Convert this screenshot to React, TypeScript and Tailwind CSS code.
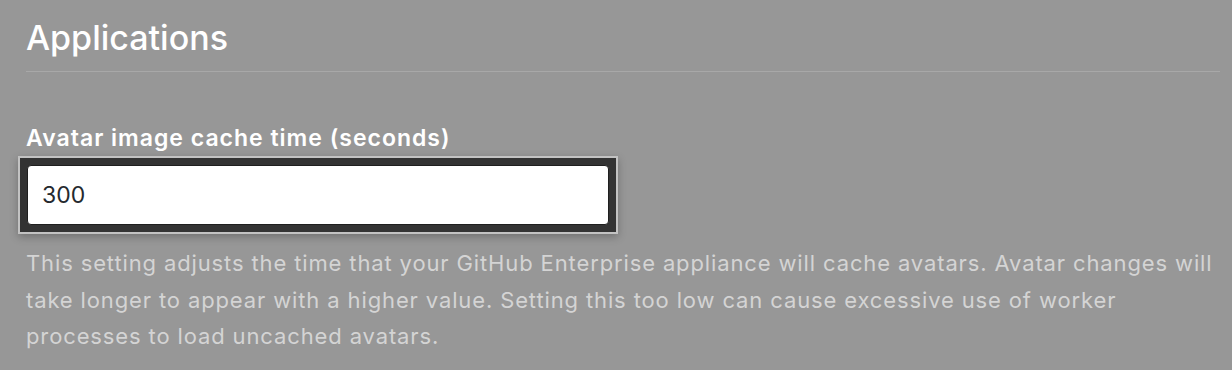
export default function App() {
  return (
    <div className="h-[370px] w-[1232px] overflow-hidden bg-[#979797] pl-[26px] pr-[12px] pt-[18px] font-['Inter',sans-serif]">
      <h2 className="border-b border-[#a8a8a8] pb-[13px] text-[34px] leading-[40px] font-medium text-white">Applications</h2>
      <form className="pt-[52px]">
        <label
          htmlFor="avatar-cache"
          className="block text-[23px] leading-[28px] font-semibold tracking-[1px] text-white"
        >
          Avatar image cache time (seconds)
        </label>
        <div className="-ml-[8px] mt-[4px] w-[600px] border-2 border-[#c2c2c2] bg-[#333333] p-[7px] shadow-[0_3px_8px_rgba(0,0,0,0.25)]">
          <input
            id="avatar-cache"
            defaultValue="300"
            className="block h-[60px] w-full rounded-[4px] border border-[#1f1f1f] bg-white px-[14px] text-[23px] text-[#24292e] outline-none"
          />
        </div>
        <p className="mt-[11px] whitespace-nowrap text-[22px] leading-[36.5px] tracking-[0.87px] text-[#d4d4d4]">
          This setting adjusts the time that your GitHub Enterprise appliance will cache avatars. Avatar changes will
          <br />
          take longer to appear with a higher value. Setting this too low can cause excessive use of worker
          <br />
          processes to load uncached avatars.
        </p>
      </form>
    </div>
  )
}
